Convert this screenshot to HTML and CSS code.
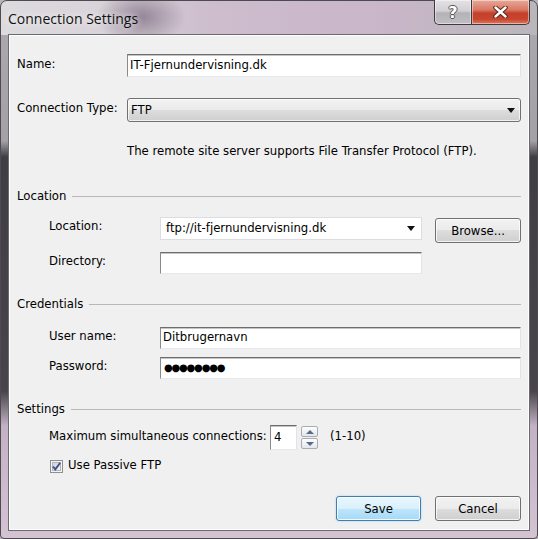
FILE: index.html
```html
<!DOCTYPE html>
<html lang="en">
<head>
    <meta charset="UTF-8">
    <title>Connection Settings</title>
    <link rel="stylesheet" href="styles.css">
</head>
<body>
    <div class="window">
        <div class="titlebar">
            <span class="title">Connection Settings</span>
            <div class="caption-buttons">
                <span class="cap help">?</span>
                <span class="cap close">
                    <svg width="15" height="12" viewBox="0 0 15 12">
                        <path d="M2.5 1.5 L12.5 10.5 M12.5 1.5 L2.5 10.5" stroke="#5a2418" stroke-width="4.4" stroke-linecap="round"/>
                        <path d="M2.5 1.5 L12.5 10.5 M12.5 1.5 L2.5 10.5" stroke="#ffffff" stroke-width="2.4" stroke-linecap="round"/>
                    </svg>
                </span>
            </div>
        </div>

        <div class="client">
            <div class="row row-name">
                <span class="label label-main">Name:</span>
                <div class="textbox grow">IT-Fjernundervisning.dk</div>
            </div>

            <div class="row row-type">
                <span class="label label-main">Connection Type:</span>
                <div class="select grow">
                    <span>FTP</span>
                    <span class="arrow"></span>
                </div>
            </div>

            <p class="description">The remote site server supports File Transfer Protocol (FTP).</p>

            <div class="legend legend-location"><span>Location</span><span class="rule"></span></div>

            <div class="row row-location indent">
                <span class="label label-sub">Location:</span>
                <div class="combo">
                    <span>ftp://it-fjernundervisning.dk</span>
                    <span class="arrow"></span>
                </div>
                <button class="btn browse">Browse...</button>
            </div>

            <div class="row row-directory indent">
                <span class="label label-sub">Directory:</span>
                <div class="textbox short"></div>
            </div>

            <div class="legend legend-credentials"><span>Credentials</span><span class="rule"></span></div>

            <div class="row row-user indent">
                <span class="label label-sub">User name:</span>
                <div class="textbox grow">Ditbrugernavn</div>
            </div>

            <div class="row row-password indent">
                <span class="label label-sub">Password:</span>
                <div class="textbox grow"><span class="dots">●●●●●●●●</span></div>
            </div>

            <div class="legend legend-settings"><span>Settings</span><span class="rule"></span></div>

            <div class="row row-max indent">
                <span class="label label-max">Maximum simultaneous connections:</span>
                <div class="textbox spinbox">4</div>
                <div class="spin">
                    <span class="spin-btn"><span class="tri up"></span></span>
                    <span class="spin-btn"><span class="tri down"></span></span>
                </div>
                <span class="label range">(1-10)</span>
            </div>

            <div class="row row-check indent">
                <svg class="checkbox" width="13" height="13" viewBox="0 0 13 13">
                    <defs>
                        <linearGradient id="cb" x1="0" y1="0" x2="1" y2="1">
                            <stop offset="0" stop-color="#cbcfd5"/>
                            <stop offset="1" stop-color="#f6f6f6"/>
                        </linearGradient>
                    </defs>
                    <rect x="0.5" y="0.5" width="12" height="12" fill="#f4f4f4" stroke="#8e8f8f"/>
                    <rect x="2.5" y="2.5" width="8" height="8" fill="url(#cb)" stroke="#b2b5bb"/>
                    <path d="M3 6.5 L5.3 9.4 L10.2 2.8" fill="none" stroke="#3c5390" stroke-width="1.9"/>
                </svg>
                <span class="check-label">Use Passive FTP</span>
            </div>

            <div class="row actions">
                <button class="btn primary">Save</button>
                <button class="btn">Cancel</button>
            </div>
        </div>
    </div>
</body>
</html>
```

FILE: styles.css
```css
body {
    margin: 0;
    font-family: 'DejaVu Sans', Verdana, sans-serif;
    font-size: 11.7px;
    color: #000;
    background: #b9b3ba;
}

/* window frame (aero glass look) */
.window {
    width: 538px;
    height: 539px;
    box-sizing: border-box;
    display: flex;
    flex-direction: column;
    border: 1px solid #4d4b50;
    border-radius: 7px 7px 4px 4px;
    background:
        radial-gradient(ellipse 45px 28px at 140px 16px, rgba(95, 75, 100, 0.55), rgba(95, 75, 100, 0)),
        linear-gradient(to right, #dddbde 0, #d9d4da 90px, #cdbdcd 210px, #c9b6c9 380px, #c0b7c1 470px, #b9b6ba 100%) top / 100% 34px no-repeat,
        linear-gradient(to bottom, #aaa8ac 34px, #a3a1a6 140px, #403e45 156px, #48444b 390px, #c3b2c5 425px, #d3c3d3 100%);
}

.titlebar {
    height: 33px;
    display: flex;
    justify-content: space-between;
    align-items: flex-start;
}
.title {
    margin: 9px 0 0 7px;
    font-family: 'Open Sans', 'Noto Sans', sans-serif;
    font-size: 14px;
    line-height: 18px;
    color: #111;
    text-shadow: 0 0 6px rgba(255, 255, 255, 0.8), 0 0 10px rgba(255, 255, 255, 0.6);
}

.caption-buttons {
    display: flex;
    margin: -1px 7px 0 0;
    height: 25px;
}
.cap {
    box-sizing: border-box;
    height: 25px;
    display: flex;
    align-items: center;
    justify-content: center;
    border: 1px solid #3c3a3f;
    border-top: none;
    box-shadow: inset 0 0 0 1px rgba(255, 255, 255, 0.45);
}
.help {
    width: 37px;
    border-right: none;
    border-radius: 0 0 0 5px;
    background: linear-gradient(to bottom, #e4e2e5 0, #d2d0d4 45%, #b4b1b7 55%, #c1bec3 100%);
    font: bold 16px 'DejaVu Sans', sans-serif;
    color: #fff;
    text-shadow: 1px 0 0 #555, -1px 0 0 #555, 0 1px 0 #555, 0 -1px 0 #555;
}
.close {
    width: 59px;
    border-radius: 0 0 5px 0;
    background: linear-gradient(to bottom, #e7a999 0, #d97a66 40%, #c4402a 55%, #c8452e 80%, #dc7a5e 100%);
}

/* client area */
.client {
    flex: 1;
    margin: 0 7px 7px;
    padding: 0 8px;
    border: 1px solid #6b6a70;
    background: #f0f0f0;
    box-shadow: inset 0 0 0 1px #ffffff;
    display: flex;
    flex-direction: column;
}

.row {
    display: flex;
    align-items: center;
}
.indent {
    padding-left: 32px;
}
/* labels sit a little above the control's centre, like the win32 dialog */
.label,
.check-label {
    margin-bottom: 4px;
}
.label-main {
    width: 110px;
    flex: none;
}
.label-sub {
    width: 111px;
    flex: none;
}
.label-max {
    width: 221px;
    flex: none;
}
.grow {
    flex: 1;
}

.textbox {
    box-sizing: border-box;
    height: 22px;
    padding: 0 0 2px 2px;
    display: flex;
    align-items: center;
    background: #fff;
    border: 1px solid;
    border-color: #6d6d6d #e2e3ea #e3e9ef #8a8a8a;
    box-shadow: inset 0 1px 0 #c5c5c5;
    white-space: nowrap;
}
.row-name .textbox {
    height: 23px;
}
.short {
    width: 262px;
}
.dots {
    font-size: 10px;
    letter-spacing: -1.2px;
    padding-left: 1px;
}

.select {
    box-sizing: border-box;
    height: 24px;
    padding: 0 5px 0 3px;
    display: flex;
    align-items: center;
    justify-content: space-between;
    border: 1px solid #707070;
    border-radius: 3px;
    background: linear-gradient(to bottom, #f2f2f2 0, #ebebeb 50%, #dddddd 50%, #cfcfcf 100%);
    box-shadow: inset 0 0 0 1px rgba(255, 255, 255, 0.7);
}
.arrow {
    width: 0;
    height: 0;
    border-left: 4px solid transparent;
    border-right: 4px solid transparent;
    border-top: 5px solid #111;
}

.description {
    margin: 22px 0 0;
    padding-left: 110px;
    line-height: 14px;
}

.legend {
    display: flex;
    align-items: center;
    line-height: 14px;
}
.rule {
    flex: 1;
    height: 1px;
    margin-left: 6px;
    background: #b8b8b8;
}

.row-name { margin-top: 19px; }
.row-type { margin-top: 21px; }
.legend-location { margin-top: 31px; }
.row-location { margin-top: 14px; align-items: flex-start; }
.row-directory { margin-top: 9px; }
.legend-credentials { margin-top: 23px; }
.row-user { margin-top: 16px; }
.row-password { margin-top: 8px; }
.legend-settings { margin-top: 23px; }
.row-max { margin-top: 9px; }
.row-check { margin-top: 8px; }
.row-location .label { line-height: 19px; }

.combo {
    box-sizing: border-box;
    width: 262px;
    height: 23px;
    padding: 0 6px 1px 5px;
    display: flex;
    align-items: center;
    justify-content: space-between;
    background: #fff;
    border: 1px solid #dcdde2;
}

.btn {
    box-sizing: border-box;
    width: 86px;
    height: 25px;
    padding: 0;
    font-family: inherit;
    font-size: inherit;
    color: #000;
    border: 1px solid #707070;
    border-radius: 3px;
    background: linear-gradient(to bottom, #f2f2f2 0, #ebebeb 50%, #dddddd 50%, #cfcfcf 100%);
    box-shadow: inset 0 0 0 1px rgba(255, 255, 255, 0.75);
}
.browse {
    margin: 1px 0 0 13px;
}
.primary {
    width: 85px;
    border-color: #3c7fb1;
    background: linear-gradient(to bottom, #eaf6fd 0, #d9f0fc 50%, #bee6fd 50%, #a7d9f5 100%);
    box-shadow: inset 0 0 0 1px rgba(255, 255, 255, 0.8), 0 0 2px rgba(80, 170, 230, 0.5);
}

.spinbox {
    width: 27px;
    height: 25px;
    padding-left: 3px;
}
.spin {
    margin-left: 4px;
    display: flex;
    flex-direction: column;
    gap: 1px;
}
.spin-btn {
    box-sizing: border-box;
    width: 17px;
    height: 11px;
    display: flex;
    align-items: center;
    justify-content: center;
    border: 1px solid #a9acb3;
    border-radius: 2px;
    background: linear-gradient(to bottom, #fdfdfd, #e4e6ea);
}
.tri {
    width: 0;
    height: 0;
    border-left: 4px solid transparent;
    border-right: 4px solid transparent;
}
.tri.up {
    border-bottom: 4px solid #56688f;
}
.tri.down {
    border-top: 4px solid #56688f;
}
.range {
    margin-left: 12px;
}

.checkbox {
    margin-left: 1px;
    flex: none;
}
.check-label {
    margin-left: 5px;
    margin-bottom: 2px;
}

.actions {
    margin-top: 22px;
    justify-content: flex-end;
    gap: 14px;
}
```
